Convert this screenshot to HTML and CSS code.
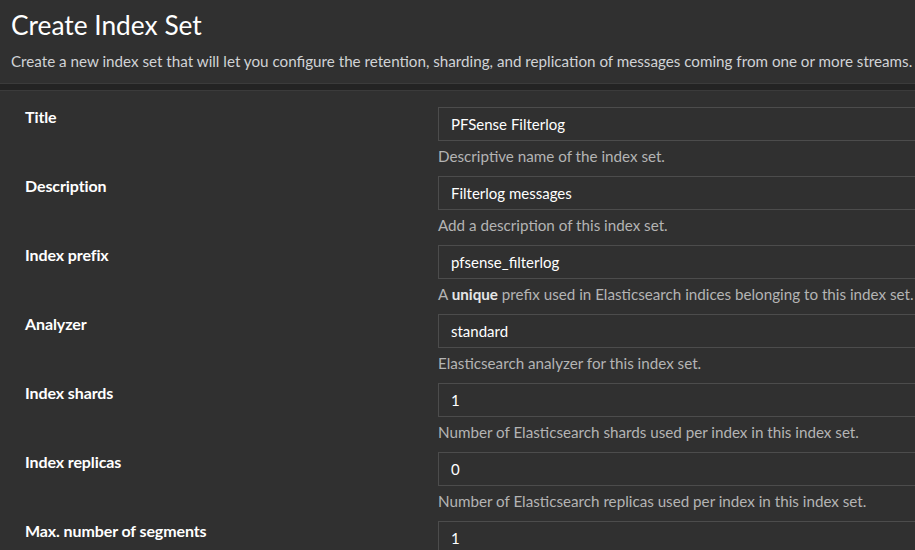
FILE: index.html
```html
<!DOCTYPE html>
<html lang="en">
<head>
<meta charset="utf-8">
<title>Create Index Set</title>
<link rel="stylesheet" href="styles.css">
</head>
<body>
<header class="page-header">
  <h1 class="page-title">Create Index Set</h1>
  <p class="page-desc">Create a new index set that will let you configure the retention, sharding, and replication of messages coming from one or more streams.</p>
</header>
<div class="separator"></div>
<main class="panel">
  <form class="form">
    <div class="row">
      <label class="label">Title</label>
      <div class="field">
        <div class="input">PFSense Filterlog</div>
        <p class="help">Descriptive name of the index set.</p>
      </div>
    </div>
    <div class="row">
      <label class="label">Description</label>
      <div class="field">
        <div class="input">Filterlog messages</div>
        <p class="help">Add a description of this index set.</p>
      </div>
    </div>
    <div class="row">
      <label class="label">Index prefix</label>
      <div class="field">
        <div class="input">pfsense_filterlog</div>
        <p class="help">A <strong>unique</strong> prefix used in Elasticsearch indices belonging to this index set.</p>
      </div>
    </div>
    <div class="row">
      <label class="label">Analyzer</label>
      <div class="field">
        <div class="input">standard</div>
        <p class="help">Elasticsearch analyzer for this index set.</p>
      </div>
    </div>
    <div class="row">
      <label class="label">Index shards</label>
      <div class="field">
        <div class="input">1</div>
        <p class="help">Number of Elasticsearch shards used per index in this index set.</p>
      </div>
    </div>
    <div class="row">
      <label class="label">Index replicas</label>
      <div class="field">
        <div class="input">0</div>
        <p class="help">Number of Elasticsearch replicas used per index in this index set.</p>
      </div>
    </div>
    <div class="row">
      <label class="label">Max. number of segments</label>
      <div class="field">
        <div class="input">1</div>
      </div>
    </div>
  </form>
</main>
</body>
</html>
```
FILE: styles.css
```css
html, body {
  margin: 0;
  padding: 0;
  background: #303030;
  overflow: hidden;
}
body {
  font-family: Lato, "Liberation Sans", sans-serif;
  color: #fff;
  width: 915px;
  height: 550px;
}
.page-header {
  height: 84px;
  box-sizing: border-box;
  padding: 9px 11px 0;
  border-bottom: 1px solid #3b3b3b;
}
.page-title {
  margin: 0;
  font-size: 26.3px;
  font-weight: 400;
  line-height: 32px;
  color: #fff;
}
.page-desc {
  margin: 10px 0 0;
  font-size: 15.2px;
  line-height: 20px;
  color: #d0d3d6;
  white-space: nowrap;
}
.separator {
  height: 6px;
  background: #232323;
  border-bottom: 1px solid #3b3b3b;
}
.panel {
  padding: 16px 0 0 25px;
}
.form {
  display: flex;
  flex-direction: column;
}
.row {
  display: grid;
  grid-template-columns: 413px 560px;
}
.label {
  font-size: 16px;
  font-weight: 700;
  line-height: 20px;
  letter-spacing: -0.1px;
}
.field {
  display: flex;
  flex-direction: column;
}
.input {
  height: 34px;
  box-sizing: border-box;
  border: 1px solid #4c4c4c;
  padding: 0 12px;
  display: flex;
  align-items: center;
  font-size: 15px;
  color: #fff;
}
.help {
  margin: 5px 0 10px;
  font-size: 15.2px;
  line-height: 20px;
  color: #b4b4b4;
  white-space: nowrap;
}
.help strong {
  color: #e6e6e6;
  font-weight: 700;
}
```
